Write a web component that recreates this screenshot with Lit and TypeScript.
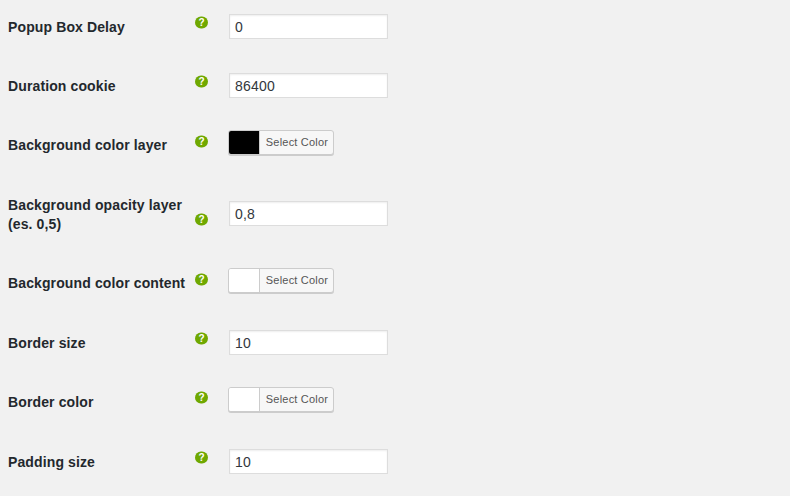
import { LitElement, css, html } from 'lit'
import { customElement } from 'lit/decorators.js'

type Row = {
   label: unknown
   kind: 'text' | 'color'
   value: string
   rowHeight: number
   iconShift: number
   labelShift: number
}

const rows: Row[] = [
   { label: 'Popup Box Delay', kind: 'text', value: '0', rowHeight: 59, iconShift: -4.5, labelShift: 1 },
   { label: 'Duration cookie', kind: 'text', value: '86400', rowHeight: 57, iconShift: -4.5, labelShift: 1 },
   { label: 'Background color layer', kind: 'color', value: '#000', rowHeight: 71, iconShift: -1.5, labelShift: 3 },
   { label: html`Background opacity layer<br />(es. 0,5)`, kind: 'text', value: '0,8', rowHeight: 67, iconShift: 5.5, labelShift: 1 },
   { label: 'Background color content', kind: 'color', value: '#fff', rowHeight: 62, iconShift: -1.5, labelShift: 3 },
   { label: 'Border size', kind: 'text', value: '10', rowHeight: 57, iconShift: -4.5, labelShift: 1 },
   { label: 'Border color', kind: 'color', value: '#fff', rowHeight: 62, iconShift: -2.5, labelShift: 3 },
   { label: 'Padding size', kind: 'text', value: '10', rowHeight: 40, iconShift: -4.5, labelShift: 1 },
]

@customElement('app-root')
export class AppRoot extends LitElement {
   static styles = css`
      :host {
         display: block;
         height: 496px;
         overflow: hidden;
         background: #f1f1f1;
         font-family: 'Liberation Sans', Arial, sans-serif;
         color: #222;
      }

      .form {
         padding-top: 14px;
         padding-left: 8px;
      }

      .row {
         display: flex;
         align-items: flex-start;
      }

      .cell {
         display: flex;
         align-items: center;
         height: 25px;
      }

      .label {
         width: 187px;
         font-size: 14px;
         font-weight: 700;
         letter-spacing: 0.12px;
         line-height: 19px;
         color: #23282d;
         white-space: nowrap;
      }

      .tip {
         width: 34px;
      }

      .icon {
         display: block;
         width: 13px;
         height: 12px;
         border-radius: 6px;
         background: #6fa800;
         color: #fff;
         font-size: 10px;
         font-weight: 700;
         line-height: 12px;
         text-align: center;
      }

      input {
         box-sizing: border-box;
         display: block;
         width: 159px;
         height: 25px;
         margin: 0;
         padding: 0 5px;
         border: 1px solid #ddd;
         border-radius: 0;
         outline: none;
         background: #fff;
         box-shadow: inset 0 1px 2px rgba(0, 0, 0, 0.07);
         font-family: inherit;
         font-size: 14px;
         letter-spacing: 0.2px;
         color: #32373c;
      }

      .picker {
         box-sizing: border-box;
         display: flex;
         width: 106px;
         height: 25px;
         margin-left: -1px;
         border: 1px solid #ccc;
         border-radius: 3px;
         overflow: hidden;
         background: #f7f7f7;
         box-shadow: 0 1px 0 #ccc;
      }

      .swatch {
         width: 30px;
         border-right: 1px solid #ccc;
      }

      .select {
         flex: 1;
         padding-left: 1px;
         font-size: 11px;
         letter-spacing: 0.2px;
         line-height: 22px;
         text-align: center;
         color: #555;
      }
   `

   renderField(row: Row) {
      if (row.kind === 'text') return html`<input type="text" .value=${row.value} />`
      return html`
         <div class="picker">
            <div class="swatch" style="background:${row.value}"></div>
            <div class="select">Select Color</div>
         </div>
      `
   }

   render() {
      return html`
         <div class="form">
            ${rows.map((row) => html`
               <div class="row" style="height:${row.rowHeight}px">
                  <div class="cell label"><span style="transform:translateY(${row.labelShift}px)">${row.label}</span></div>
                  <div class="cell tip"><span class="icon" style="transform:translateY(${row.iconShift}px)">?</span></div>
                  <div class="cell">${this.renderField(row)}</div>
               </div>
            `)}
         </div>
      `
   }
}
